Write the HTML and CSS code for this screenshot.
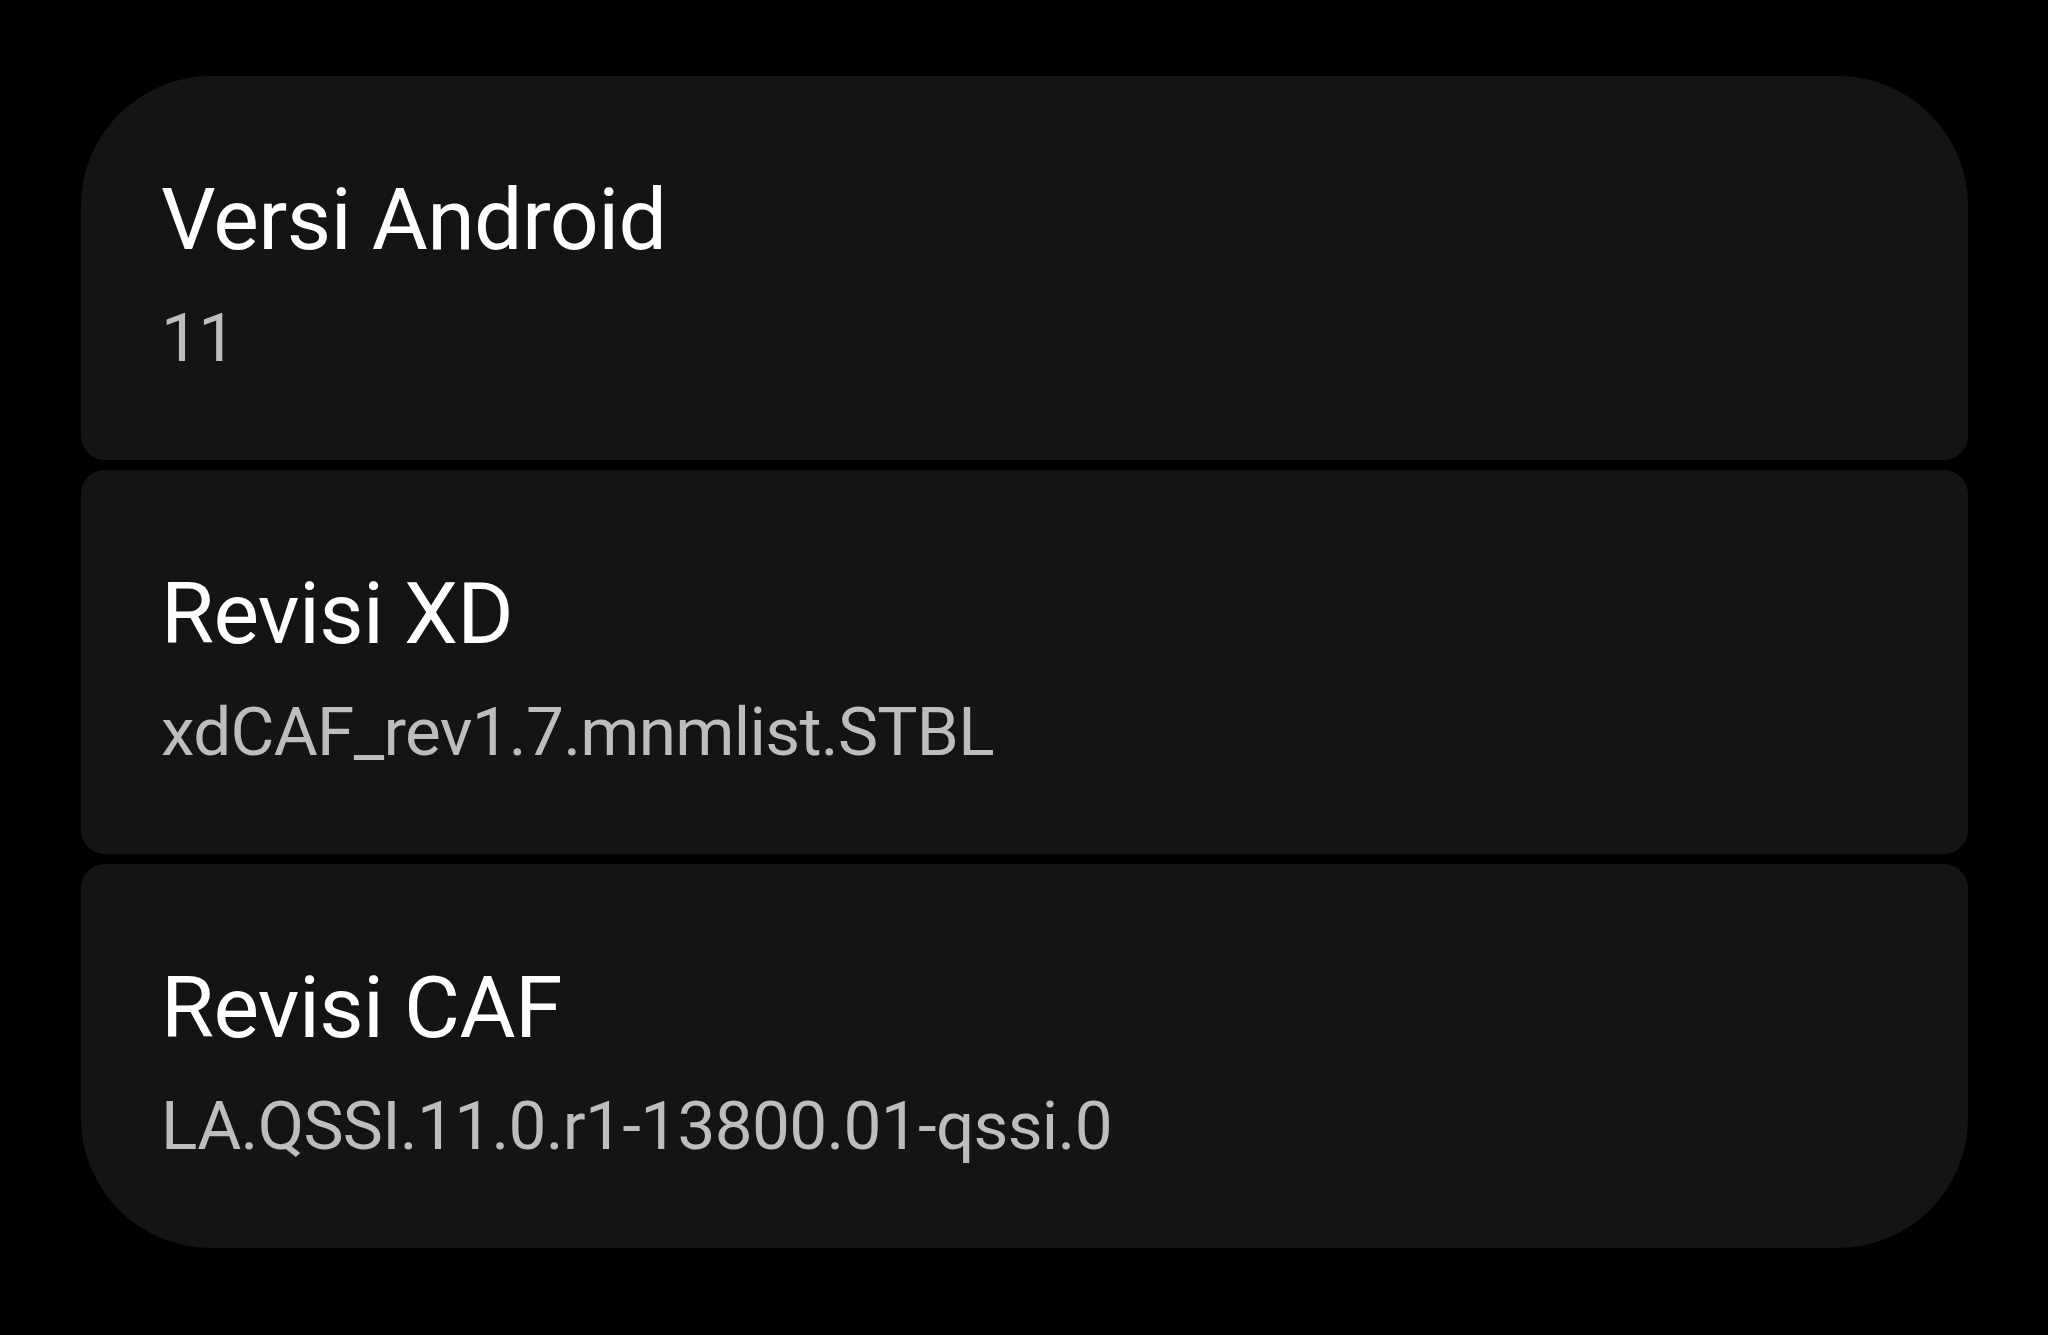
FILE: index.html
```html
<!DOCTYPE html>
<html lang="id">
<head>
<meta charset="utf-8">
<title>Info</title>
<link rel="stylesheet" href="styles.css">
</head>
<body>
<div class="list">
  <div class="item first">
    <div class="title">Versi Android</div>
    <div class="summary">11</div>
  </div>
  <div class="item">
    <div class="title">Revisi XD</div>
    <div class="summary">xdCAF_rev1.7.mnmlist.STBL</div>
  </div>
  <div class="item last">
    <div class="title">Revisi CAF</div>
    <div class="summary">LA.QSSI.11.0.r1-13800.01-qssi.0</div>
  </div>
</div>
</body>
</html>
```
FILE: styles.css
```css
html, body {
  margin: 0;
  padding: 0;
  background: #000;
  width: 2048px;
  height: 1335px;
  overflow: hidden;
}
.list {
  display: flex;
  flex-direction: column;
  gap: 10px;
  padding: 76px 0 0 81px;
  width: 1887px;
}
.item {
  box-sizing: border-box;
  height: 384px;
  background: #141414;
  border-radius: 24px;
  padding: 94px 0 0 80px;
  font-family: Roboto, "Noto Sans", sans-serif;
}
.item.first {
  border-radius: 130px 130px 24px 24px;
}
.item.last {
  border-radius: 24px 24px 130px 130px;
}
.title {
  color: #fff;
  font-size: 86px;
  line-height: 100px;
  letter-spacing: -0.6px;
}
.summary {
  margin-top: 28px;
  color: #bdbdbd;
  font-size: 67.5px;
  line-height: 80px;
  letter-spacing: -0.7px;
}
```
